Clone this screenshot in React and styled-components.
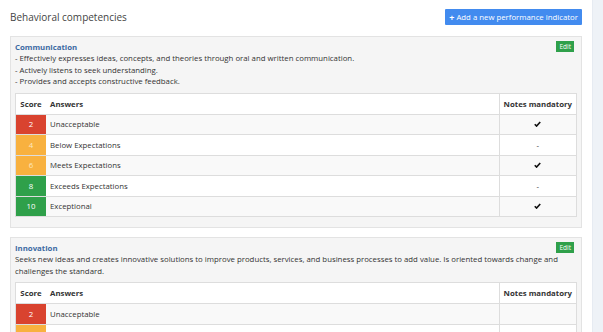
import React from "react";
import styled, { createGlobalStyle } from "styled-components";

const Global = createGlobalStyle`
    html, body {
        margin: 0;
        padding: 0;
        background: #fff;
    }
    body {
        font-family: "Open Sans", "Liberation Sans", sans-serif;
        font-size: 7.8px;
        color: #333;
    }
`;

const _Page = styled.div`
    display: flex;
    height: 332px;
    overflow: hidden;
`;

const _Main = styled.div`
    flex: 1;
    padding: 8px 10px 0 10px;
    min-width: 0;
`;

const _Side = styled.div`
    width: 10px;
    background: #eef2f7;
    border-left: 1px solid #e6ebf2;
`;

const _Header = styled.div`
    display: flex;
    align-items: center;
    justify-content: space-between;
    height: 18px;
    margin-bottom: 10px;
`;

const _Title = styled.h4`
    margin: 0;
    font-size: 10px;
    font-weight: 400;
    color: #444;
`;

const _AddBtn = styled.button`
    background: #428bef;
    color: #fff;
    border: none;
    border-radius: 1px;
    height: 16px;
    padding: 0 4px;
    font-family: inherit;
    font-size: 7.8px;
    display: flex;
    align-items: center;
    gap: 2px;
`;

const _Plus = styled.span`
    font-weight: 700;
    font-size: 9px;
`;

const _Panel = styled.div`
    background: #f5f5f5;
    border: 1px solid #e3e3e3;
    padding: 4px 4px 10px 4px;
    margin-bottom: 9px;
`;

const _PanelHead = styled.div`
    display: flex;
    justify-content: space-between;
    align-items: flex-start;
`;

const _Name = styled.div`
    color: #3d6aa3;
    font-weight: 700;
    font-size: 7.8px;
    line-height: 12px;
`;

const _Edit = styled.span`
    background: #2fa04a;
    color: #fff;
    font-size: 6.5px;
    padding: 0 3px;
    line-height: 11px;
    margin-right: 3px;
`;

const _Desc = styled.div`
    line-height: 11.5px;
    margin-bottom: 5px;
`;

const _Table = styled.table`
    width: 100%;
    border-collapse: collapse;
    background: #fff;
    border: 1px solid #ddd;
`;

const _Th = styled.th`
    text-align: ${(p) => p.$align || "left"};
    font-weight: 700;
    height: 20px;
    padding: 0 4px;
    white-space: nowrap;
    border-bottom: 1px solid #ddd;
    border-left: ${(p) => (p.$bordered ? "1px solid #ddd" : "none")};
    width: ${(p) => p.$w || "auto"};
`;

const _Tr = styled.tr`
    background: ${(p) => (p.$odd ? "#f9f9f9" : "#fff")};
`;

const _Td = styled.td`
    height: 19.5px;
    padding: 0 4px;
    border-top: 1px solid #ddd;
    border-left: ${(p) => (p.$bordered ? "1px solid #ddd" : "none")};
    text-align: ${(p) => p.$align || "left"};
`;

const _Score = styled.td`
    background: ${(p) => p.$color};
    color: ${(p) => p.$text || "#fff"};
    text-align: center;
    border-top: 1px solid #ddd;
    width: 22px;
`;

const SCORES = [
    { score: 2, label: "Unacceptable", color: "#d9432f", mandatory: true },
    { score: 4, label: "Below Expectations", color: "#f8b13f", text: "#fde8bf", mandatory: false },
    { score: 6, label: "Meets Expectations", color: "#f8b13f", text: "#fde8bf", mandatory: true },
    { score: 8, label: "Exceeds Expectations", color: "#2fa04a", mandatory: false },
    { score: 10, label: "Exceptional", color: "#2fa04a", mandatory: true },
];

const Check = () => (
    <svg width="7" height="6" viewBox="0 0 8 7">
        <path d="M0.8 3.8 L2.9 5.9 L7.2 1.2" fill="none" stroke="#111" strokeWidth="1.9" />
    </svg>
);

function Competency({ name, desc, rows, showMarks }) {
    return (
        <_Panel>
            <_PanelHead>
                <_Name>{name}</_Name>
                <_Edit>Edit</_Edit>
            </_PanelHead>
            <_Desc>{desc}</_Desc>
            <_Table>
                <thead>
                    <tr>
                        <_Th $w="22px" $align="center">Score</_Th>
                        <_Th>Answers</_Th>
                        <_Th $w="66px" $align="center" $bordered>Notes mandatory</_Th>
                    </tr>
                </thead>
                <tbody>
                    {rows.map((r, i) => (
                        <_Tr key={r.score} $odd={i % 2 === 0}>
                            <_Score $color={r.color} $text={r.text}>{r.score}</_Score>
                            <_Td>{r.label}</_Td>
                            <_Td $align="center" $bordered>
                                {showMarks && (r.mandatory ? <Check /> : "-")}
                            </_Td>
                        </_Tr>
                    ))}
                </tbody>
            </_Table>
        </_Panel>
    );
}

export default function App() {
    return (
        <_Page>
            <Global />
            <_Main>
                <_Header>
                    <_Title>Behavioral competencies</_Title>
                    <_AddBtn>
                        <_Plus>+</_Plus> Add a new performance indicator
                    </_AddBtn>
                </_Header>
                <Competency
                    name="Communication"
                    desc={
                        <>
                            - Effectively expresses ideas, concepts, and theories through oral and written communication.<br />
                            - Actively listens to seek understanding.<br />
                            - Provides and accepts constructive feedback.
                        </>
                    }
                    rows={SCORES}
                    showMarks
                />
                <Competency
                    name="Innovation"
                    desc="Seeks new ideas and creates innovative solutions to improve products, services, and business processes to add value. Is oriented towards change and challenges the standard."
                    rows={SCORES}
                />
            </_Main>
            <_Side />
        </_Page>
    );
}
